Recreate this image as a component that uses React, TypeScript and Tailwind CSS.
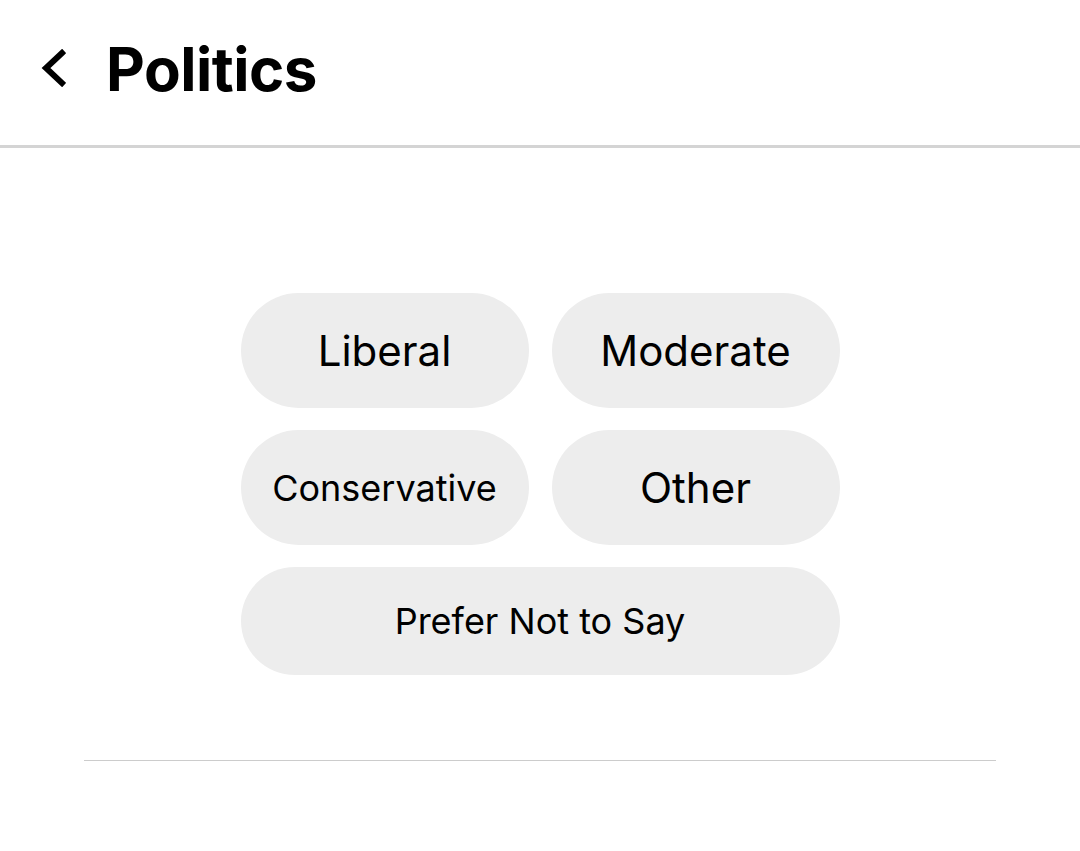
const options = [
  { label: 'Liberal', size: 'text-[42px]' },
  { label: 'Moderate', size: 'text-[42px]' },
  { label: 'Conservative', size: 'text-[36px]' },
  { label: 'Other', size: 'text-[42px]' },
]

export default function App() {
  return (
    <div className="min-h-[851px] bg-white text-black" style={{ fontFamily: 'Inter, "Noto Sans", sans-serif' }}>
      <header className="h-[148px] flex items-center border-b-[3px] border-[#d4d4d4]">
        <button className="ml-[40px] w-[26px] h-[38px] -mt-[10px] flex items-center justify-center">
          <svg width="26" height="38" viewBox="0 0 26 38" fill="none">
            <path d="M22 4 L6 19 L22 34" stroke="black" strokeWidth="6" strokeLinecap="square" strokeLinejoin="miter" />
          </svg>
        </button>
        <h1 className="ml-[40px] text-[60px] font-bold tracking-[-0.5px] leading-none -mt-[8px]">Politics</h1>
      </header>

      <div className="flex flex-col items-center pt-[145px]">
        <div className="grid grid-cols-2 gap-x-[23px] gap-y-[22px] w-[599px]">
          {options.map((o) => (
            <button
              key={o.label}
              className={`h-[115px] rounded-[58px] bg-[#ededed] flex items-center justify-center ${o.size}`}
            >
              {o.label}
            </button>
          ))}
          <button className="col-span-2 h-[108px] rounded-[54px] bg-[#ededed] flex items-center justify-center text-[36px]">
            Prefer Not to Say
          </button>
        </div>
        <div className="mt-[85px] w-[912px] h-px bg-[#cccccc]" />
      </div>
    </div>
  )
}
